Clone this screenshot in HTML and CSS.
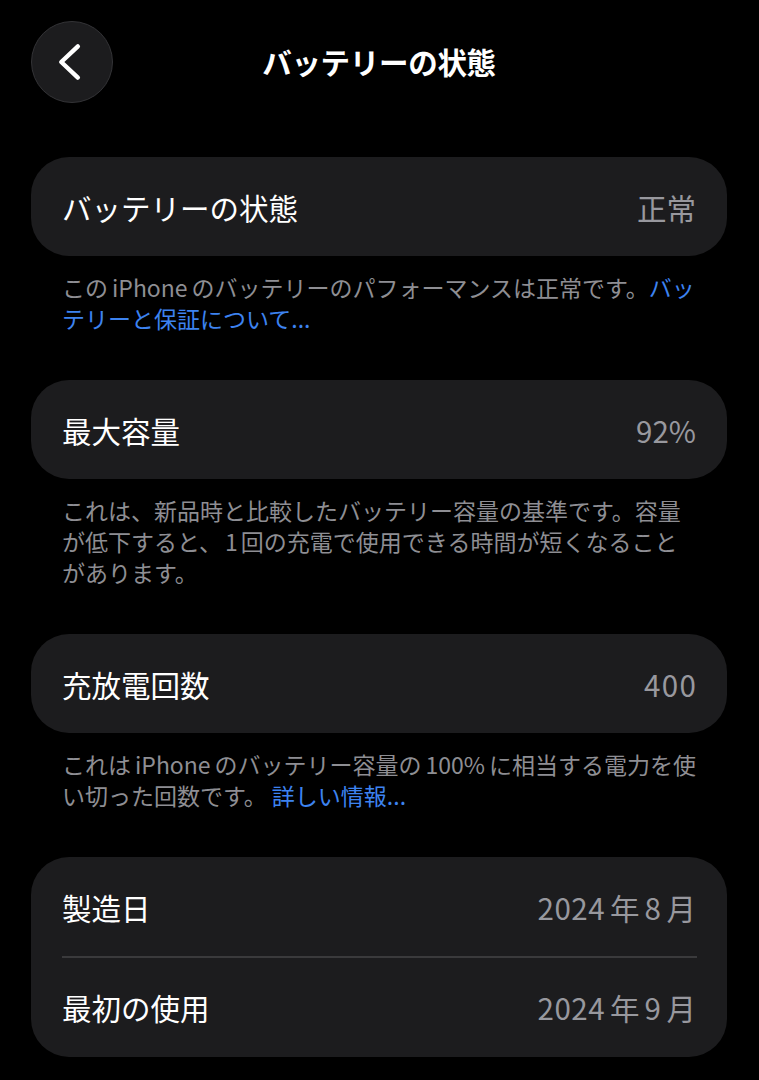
FILE: index.html
```html
<!DOCTYPE html>
<html lang="ja">
<head>
<meta charset="utf-8">
<title>バッテリーの状態</title>
<link rel="stylesheet" href="styles.css">
</head>
<body>
<div class="page">
  <header class="nav">
    <button class="back" aria-label="戻る">
      <svg viewBox="0 0 82 82" width="82" height="82"><path d="M47 25 L30 41 L47 57" fill="none" stroke="#ffffff" stroke-width="4.5" stroke-linecap="round" stroke-linejoin="round"/></svg>
    </button>
    <h1 class="title">バッテリーの状態</h1>
    <div class="spacer"></div>
  </header>

  <section class="group first">
    <div class="card">
      <div class="row"><span class="label">バッテリーの状態</span><span class="value">正常</span></div>
    </div>
    <p class="note">この<span class="lat">iPhone</span>のバッテリーのパフォーマンスは正常です。<a class="link">バッ<br>テリーと保証について...</a></p>
  </section>

  <section class="group">
    <div class="card">
      <div class="row"><span class="label">最大容量</span><span class="value">92%</span></div>
    </div>
    <p class="note">これは、新品時と比較したバッテリー容量の基準です。容量<br>が低下すると、<span class="num">1</span>回の充電で使用できる時間が短くなること<br>があります。</p>
  </section>

  <section class="group">
    <div class="card">
      <div class="row"><span class="label">充放電回数</span><span class="value wide">400</span></div>
    </div>
    <p class="note">これは<span class="lat">iPhone</span>のバッテリー容量の<span class="lat">100%</span>に相当する電力を使<br>い切った回数です。 <a class="link">詳しい情報...</a></p>
  </section>

  <section class="group">
    <div class="card">
      <div class="row"><span class="label">製造日</span><span class="value"><span class="num">2024</span>年<span class="num">8</span>月</span></div>
      <div class="sep"></div>
      <div class="row"><span class="label">最初の使用</span><span class="value"><span class="num">2024</span>年<span class="num">9</span>月</span></div>
    </div>
  </section>
</div>
</body>
</html>
```

FILE: styles.css
```css
* { box-sizing: border-box; }
html, body {
  margin: 0;
  padding: 0;
  background: #000000;
}
body {
  font-family: "Noto Sans CJK JP", "Noto Sans", sans-serif;
  color: #ffffff;
  width: 759px;
  height: 1080px;
  overflow: hidden;
}
.page {
  padding: 21px 32px 0 31px;
}
.nav {
  display: grid;
  grid-template-columns: 82px 1fr 82px;
  align-items: center;
  height: 82px;
}
.back {
  width: 82px;
  height: 82px;
  border-radius: 50%;
  background: #1c1c1e;
  border: 1px solid #333336;
  padding: 0;
  margin: 0;
  display: flex;
  align-items: center;
  justify-content: center;
}
.back svg { display: block; }
.title {
  margin: 0;
  text-align: center;
  font-size: 29.5px;
  font-weight: 700;
  line-height: 1;
  letter-spacing: -0.3px;
}
.group { margin-top: 46px; }
.group.first { margin-top: 54px; }
.card {
  background: #1c1c1e;
  border-radius: 38px;
  overflow: hidden;
}
.row {
  height: 99px;
  display: flex;
  align-items: center;
  justify-content: space-between;
  padding: 0 31px;
  font-size: 29.5px;
}
.label { color: #ffffff; }
.value { color: #98989e; }
.value.wide { letter-spacing: 1.5px; margin-right: -1.5px; }
.sep {
  height: 1.5px;
  background: #3a3a3c;
  margin: 0 30px 0 31px;
}
.note {
  margin: 0;
  padding: 16px 10px 0 31px;
  font-size: 23px;
  line-height: 31px;
  color: #8e8e93;
}
.link { color: #3d83f0; }
.lat { margin: 0 4px; }
.num { margin: 0 3px; }
.value .num { margin: 0 5px; letter-spacing: 0.5px; }
.value .num:first-child { margin-left: 0; }
```
